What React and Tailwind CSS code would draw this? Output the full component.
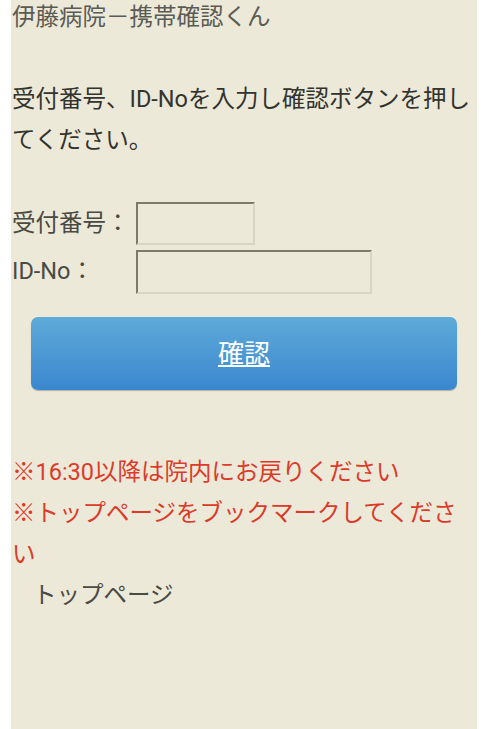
import React from "react";

const font = {
  fontFamily: 'Roboto, "Noto Sans CJK JP", "Noto Sans", sans-serif',
};

function Field({ label, width, height }) {
  return (
    <div className={`flex items-center ${height}`}>
      <span className="w-[124px] shrink-0 text-[#4a4a44]">{label}</span>
      <input
        type="text"
        className={`h-full ${width} border-2 border-t-[#7b7b6c] border-l-[#7b7b6c] border-b-[#d8d5c4] border-r-[#d8d5c4] bg-transparent outline-none`}
      />
    </div>
  );
}

export default function App() {
  return (
    <div className="min-h-[729px] bg-white" style={font}>
      <div className="ml-[11px] w-[466px] min-h-[729px] bg-[#ece9d8] pl-[1px] text-[23.5px]">
        <h1 className="leading-[34px] font-normal text-[#5b5b55]">伊藤病院－携帯確認くん</h1>

        <p className="mt-[44.5px] leading-[41px] text-[#33332f]">
          受付番号、ID-Noを入力し確認ボタンを押してください。
        </p>

        <form className="mt-[41.5px] flex flex-col gap-[5px]" onSubmit={(e) => e.preventDefault()}>
          <Field label="受付番号：" width="w-[119px]" height="h-[43px]" />
          <Field label="ID-No：" width="w-[236px]" height="h-[44px]" />
        </form>

        <button
          type="button"
          className="mt-[23px] ml-[19px] flex h-[73px] w-[426px] items-center justify-center rounded-[7px] bg-gradient-to-b from-[#5eaad8] to-[#3b87cf] shadow-[0_1px_1px_rgba(0,0,0,0.25)]"
        >
          <span className="text-[26px] leading-none text-white underline underline-offset-2">確認</span>
        </button>

        <div className="mt-[61.5px] leading-[41px] text-[#dc3b2a]">
          <p>※16:30以降は院内にお戻りください</p>
          <p>※トップページをブックマークしてください</p>
        </div>

        <a href="#" className="block pl-[21px] leading-[41px] text-[#4a4a44]">
          トップページ
        </a>
      </div>
    </div>
  );
}
